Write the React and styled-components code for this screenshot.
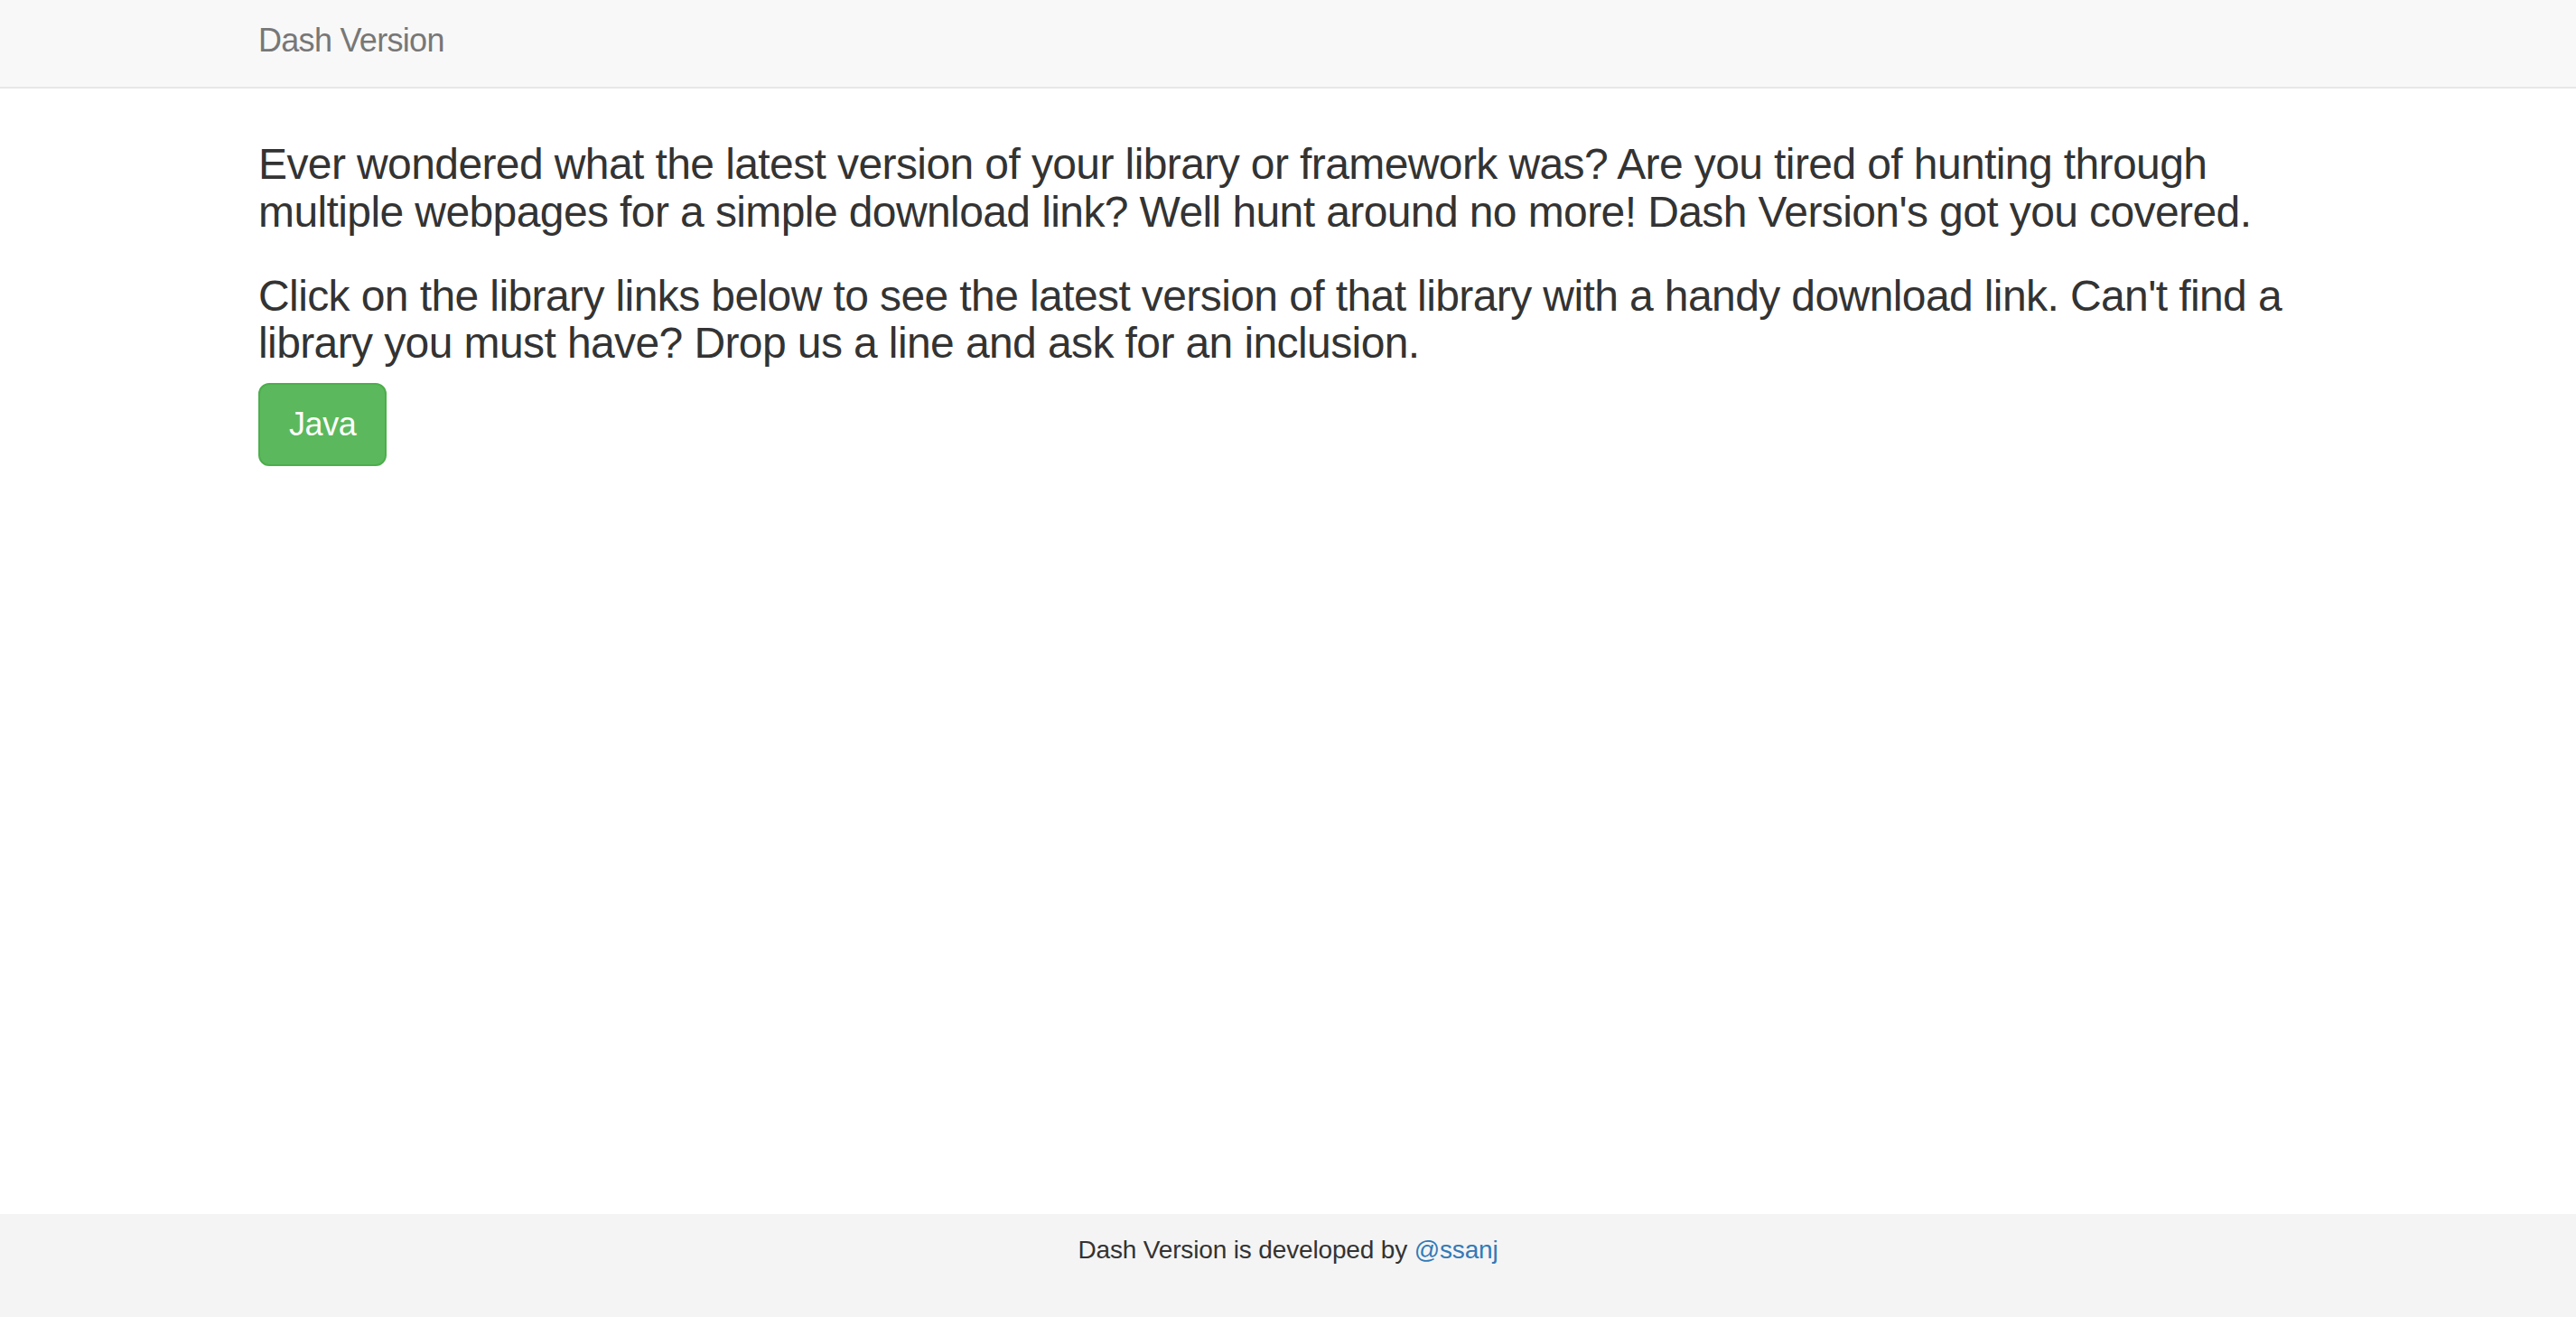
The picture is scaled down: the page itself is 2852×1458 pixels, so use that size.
import React from "react";
import styled, { createGlobalStyle } from "styled-components";

const GlobalStyle = createGlobalStyle`
  html, body {
    margin: 0;
    padding: 0;
    background: #ffffff;
  }
  body {
    font-family: "Liberation Sans", Arial, Helvetica, sans-serif;
    font-size: 28px;
    line-height: 1.42857;
    color: #333333;
  }
  * { box-sizing: border-box; }
`;

const Page = styled.div`
  min-height: 100vh;
  display: flex;
  flex-direction: column;
`;

const Navbar = styled.nav`
  height: 98px;
  background: #f8f8f8;
  border-bottom: 2px solid #e7e7e7;
  flex-shrink: 0;
`;

const Container = styled.div`
  width: 2280px;
  margin: 0 auto;
`;

const NavInner = styled(Container)`
  height: 100%;
  display: flex;
  align-items: center;
`;

const Brand = styled.a`
  font-size: 36px;
  line-height: 40px;
  letter-spacing: -0.7px;
  color: #777777;
  text-decoration: none;
  margin-top: -6px;
`;

const Main = styled(Container)`
  flex: 1;
  padding-top: 58px;
`;

const Lead = styled.h3`
  font-size: 48px;
  font-weight: 400;
  line-height: 1.1;
  letter-spacing: -0.6px;
  margin: 0 0 ${(p) => (p.$last ? "17px" : "40px")};
  color: #333333;
`;

const Button = styled.a`
  display: inline-block;
  padding: 20px 32px;
  font-size: 36px;
  line-height: 48px;
  letter-spacing: -0.4px;
  border-radius: 12px;
  color: #ffffff;
  background: #5cb85c;
  border: 2px solid #4cae4c;
  text-decoration: none;
  cursor: pointer;
`;

const Footer = styled.footer`
  height: 114px;
  background: #f4f4f4;
  flex-shrink: 0;
  padding-top: 20px;
  text-align: center;
`;

const FooterText = styled.p`
  margin: 0;
  font-size: 28px;
  line-height: 40px;
  letter-spacing: -0.15px;
  color: #333333;
`;

const Link = styled.a`
  color: #337ab7;
  text-decoration: none;
`;

export default function App() {
  return (
    <Page>
      <GlobalStyle />
      <Navbar>
        <NavInner>
          <Brand href="#">Dash Version</Brand>
        </NavInner>
      </Navbar>
      <Main>
        <Lead>
          Ever wondered what the latest version of your library or framework was? Are you tired of hunting through
          multiple webpages for a simple download link? Well hunt around no more! Dash Version's got you covered.
        </Lead>
        <Lead $last>
          Click on the library links below to see the latest version of that library with a handy download link. Can't find a
          library you must have? Drop us a line and ask for an inclusion.
        </Lead>
        <Button href="#">Java</Button>
      </Main>
      <Footer>
        <FooterText>
          Dash Version is developed by <Link href="#">@ssanj</Link>
        </FooterText>
      </Footer>
    </Page>
  );
}
